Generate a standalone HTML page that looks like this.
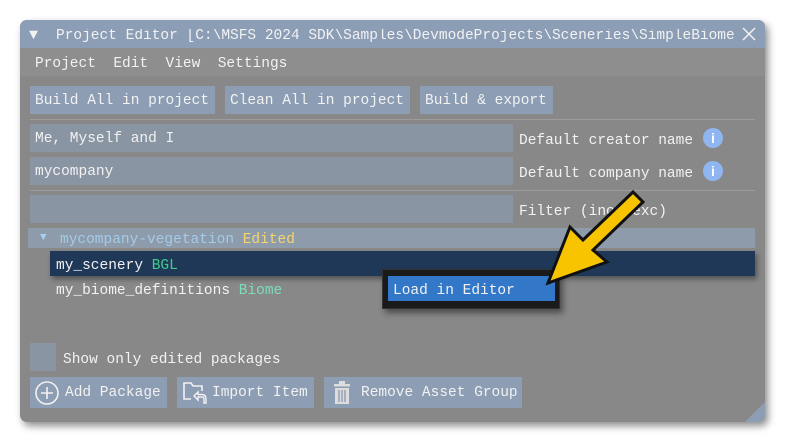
<!DOCTYPE html>
<html><head><style>
*{margin:0;padding:0;box-sizing:border-box}
body{width:785px;height:444px;background:#fff;position:relative;overflow:hidden;font-family:"Liberation Mono",monospace;font-size:14.5px;color:#f2f2f2}
.win{position:absolute;left:20px;top:20px;width:745px;height:402px;background:#888;border-radius:7px;overflow:hidden;box-shadow:3px 4px 8px rgba(0,0,0,.45)}
.abs{position:absolute;white-space:pre;line-height:1}
.title{position:absolute;left:0;top:0;width:745px;height:28px;background:#8c9db6}
.menu{position:absolute;left:0;top:28px;width:745px;height:28px;background:#8e8e8e}
.btn{position:absolute;background:#8c9db4;height:28px;line-height:30px;padding-left:5px;white-space:pre}
.fld{position:absolute;background:#8a95a3;height:28px;line-height:30px;padding-left:5px;white-space:pre;left:10px;width:483px}
.sep{position:absolute;left:10px;width:725px;height:1px;background:#9c9c9c}
.info{position:absolute;width:20px;height:20px;border-radius:50%;background:#8fb6f0;color:#fff;font-family:"Liberation Sans",sans-serif;font-weight:bold;font-size:14px;text-align:center;line-height:20px}
</style></head><body>
<div class="win">
<div class="title"></div>
<div class="abs" style="left:9px;top:8px;font-size:15px">▼</div>
<div class="abs" style="left:36px;top:9px;width:680px;overflow:hidden">Project Editor [C:\MSFS 2024 SDK\Samples\DevmodeProjects\Sceneries\SimpleBiome</div>
<svg style="position:absolute;left:722px;top:7px" width="14" height="14"><path d="M1 1L13 13M13 1L1 13" stroke="#f2f2f2" stroke-width="1.5"/></svg>
<div class="menu"></div>
<div class="abs" style="left:15px;top:37px">Project  Edit  View  Settings</div>
<div class="btn" style="left:10px;top:66px;width:185px">Build All in project</div>
<div class="btn" style="left:205px;top:66px;width:185px">Clean All in project</div>
<div class="btn" style="left:400px;top:66px;width:133px">Build &amp; export</div>
<div class="sep" style="top:99px"></div>
<div class="fld" style="top:104px">Me, Myself and I</div>
<div class="abs" style="left:499px;top:114px">Default creator name</div>
<div class="info" style="left:683px;top:108px">i</div>
<div class="fld" style="top:137px">mycompany</div>
<div class="abs" style="left:499px;top:147px">Default company name</div>
<div class="info" style="left:683px;top:141px">i</div>
<div class="sep" style="top:170px"></div>
<div class="fld" style="top:175px"></div>
<div class="abs" style="left:499px;top:185px">Filter (inc,-exc)</div>
<div style="position:absolute;left:8px;top:208px;width:727px;height:20px;background:#8e9bab"></div>
<div class="abs" style="left:20px;top:213px;font-size:11px;color:#a8d0f0">▼</div>
<div class="abs" style="left:40px;top:213px;color:#a4cbe8">mycompany-vegetation <span style="color:#f5d56e">Edited</span></div>
<div style="position:absolute;left:30px;top:231px;width:705px;height:25px;background:#1f3858;box-shadow:2px 3px 5px rgba(0,0,0,.4)"></div>
<div class="abs" style="left:36px;top:239px">my_scenery <span style="color:#3ecf8e">BGL</span></div>
<div class="abs" style="left:36px;top:264px">my_biome_definitions <span style="color:#7fdcb8">Biome</span></div>
<div style="position:absolute;left:362px;top:249px;width:178px;height:40px;background:#1a1a1a;border:1px solid #333;box-shadow:3px 4px 6px rgba(0,0,0,.45)"></div>
<div style="position:absolute;left:368px;top:256px;width:167px;height:25px;background:#3378c8"></div>
<div class="abs" style="left:373px;top:264px">Load in Editor</div>
<div style="position:absolute;left:10px;top:323px;width:26px;height:28px;background:#8a95a3"></div>
<div class="abs" style="left:43px;top:333px">Show only edited packages</div>
<div class="btn" style="left:10px;top:357px;width:137px;height:31px;line-height:33px;padding-left:35px">Add Package</div>
<svg style="position:absolute;left:14px;top:360px" width="26" height="26"><circle cx="13" cy="13" r="11" fill="none" stroke="#f2f2f2" stroke-width="1.6"/><path d="M13 7V19M7 13H19" stroke="#f2f2f2" stroke-width="1.6"/></svg>
<div class="btn" style="left:157px;top:357px;width:137px;height:31px;line-height:33px;padding-left:35px">Import Item</div>
<svg style="position:absolute;left:162px;top:360px" width="28" height="26"><path d="M9 19H2V3H9L11 6H20V11" fill="none" stroke="#f2f2f2" stroke-width="1.6"/><path d="M12 16L16 12V14.5H20Q24 14.5 24 19V23H22V19Q22 17 20 17H16V20Z" fill="none" stroke="#f2f2f2" stroke-width="1.4"/></svg>
<div class="btn" style="left:304px;top:357px;width:198px;height:31px;line-height:33px;padding-left:37px">Remove Asset Group</div>
<svg style="position:absolute;left:312px;top:361px" width="20" height="24"><rect x="2" y="3" width="16" height="2.5" fill="#ddd"/><rect x="7" y="0" width="6" height="3" fill="#ddd"/><path d="M3 7H17V23H3Z" fill="#ddd"/><path d="M7 9V21M10 9V21M13 9V21" stroke="#8c9db4" stroke-width="1.4"/></svg>
<svg style="position:absolute;left:725px;top:382px" width="20" height="20"><path d="M20 0V20H0Z" fill="#8c9db4"/></svg>
</div>
<svg style="position:absolute;left:0;top:0" width="785" height="444"><polygon points="633,192 643,202 593,250 607,262 548,283 570,227 583,240" fill="#f8c400" stroke="#111" stroke-width="3" stroke-linejoin="miter"/></svg>
</body></html>
